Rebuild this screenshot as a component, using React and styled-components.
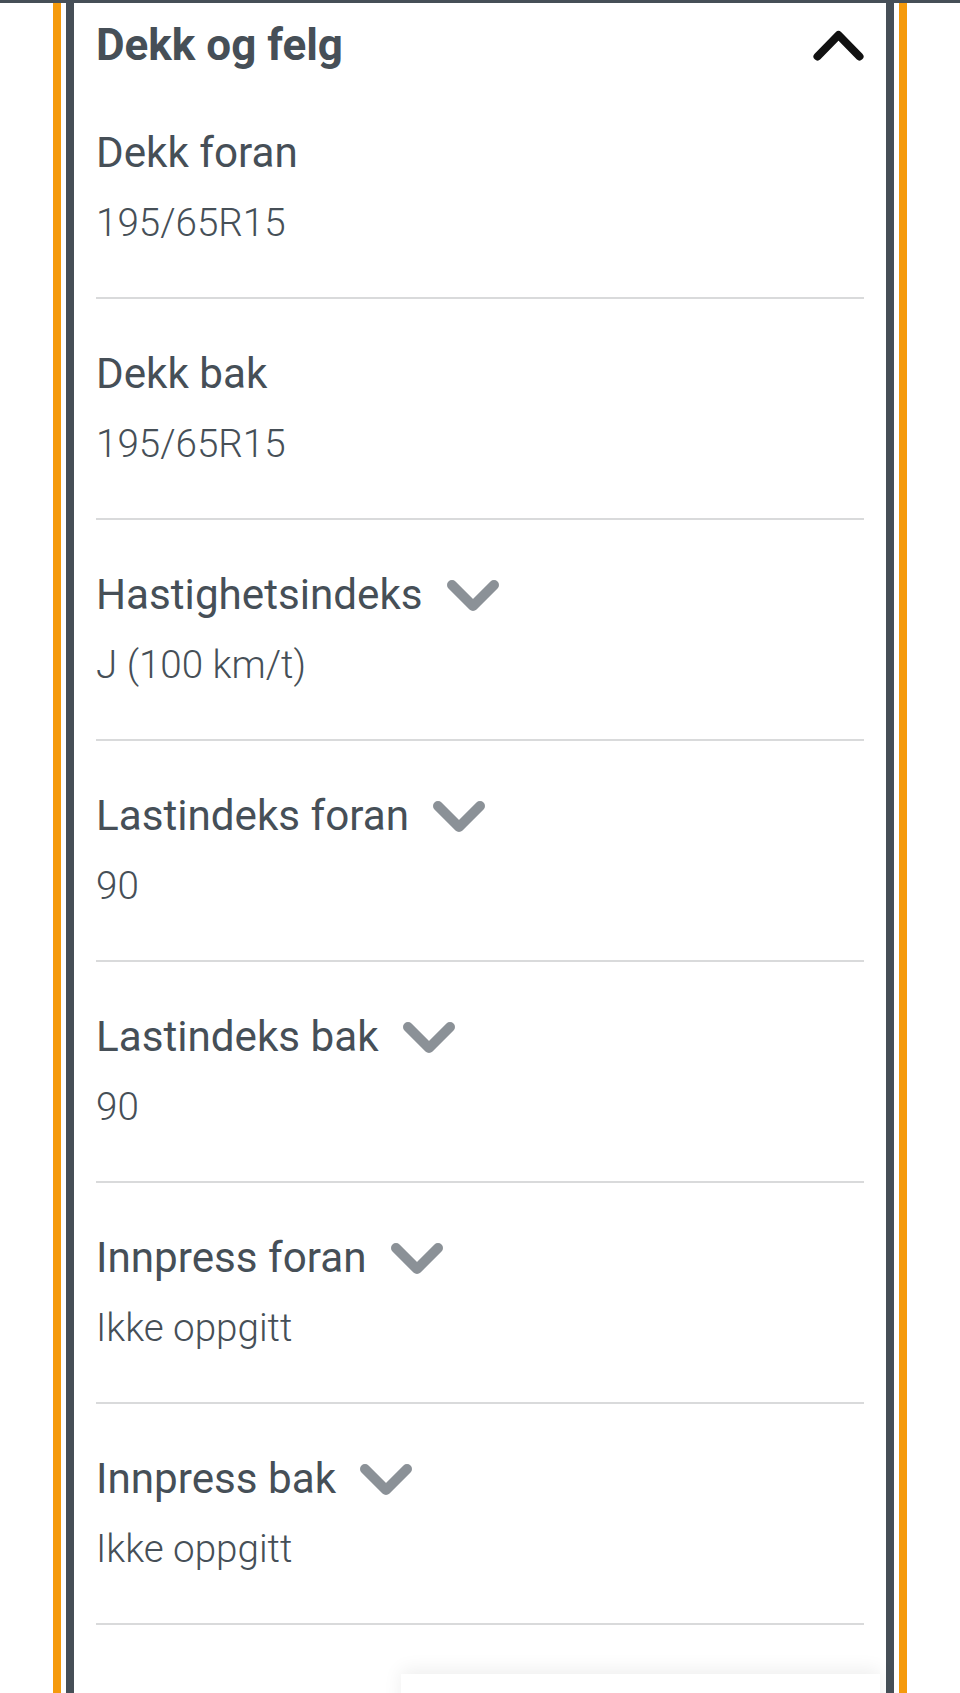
import styled, { createGlobalStyle } from "styled-components"

const GlobalStyle = createGlobalStyle`
    html, body {
        margin: 0;
        padding: 0;
        background: #ffffff;
    }
    body {
        font-family: Roboto, "Liberation Sans", Arial, sans-serif;
        color: #464f57;
    }
`

const Page = styled.div`
    height: 1693px;
    overflow: hidden;
    background: #ffffff;
`

const TopRule = styled.div`
    height: 3px;
    background: #464f57;
`

const Frame = styled.div`
    margin: 0 53px;
    padding: 0 5px;
    border-left: 8px solid #f59a0c;
    border-right: 8px solid #f59a0c;
    height: 1690px;
    box-sizing: border-box;
`

const Panel = styled.section`
    height: 100%;
    box-sizing: border-box;
    padding: 0 22px;
    border-left: 8px solid #464f57;
    border-right: 8px solid #464f57;
`

const Header = styled.div`
    display: flex;
    align-items: center;
    justify-content: space-between;
    padding: 16px 0 7px;
`

const Heading = styled.h2`
    margin: 0;
    font-size: 44px;
    line-height: 52px;
    font-weight: 700;
    color: #464f57;
`

const List = styled.dl`
    margin: 0;
`

const Row = styled.div`
    padding: 50px 0 51px;
    border-bottom: 2px solid #d9dadb;
`

const Label = styled.dt`
    display: flex;
    align-items: center;
    gap: 24px;
    font-size: 42.2px;
    line-height: 50px;
    font-weight: 400;
    color: #464f57;
`

const Value = styled.dd`
    margin: 22px 0 0;
    font-size: 38.6px;
    line-height: 46px;
    font-weight: 300;
    color: #464f57;
`

const Floating = styled.div`
    margin: 49px -16px 0 auto;
    width: 479px;
    height: 120px;
    background: #ffffff;
    box-shadow: 0 -4px 18px rgba(0, 0, 0, 0.07);
`

const ChevronUp = () => (
    <svg width="51" height="32" viewBox="0 0 51 32" fill="none">
        <polyline points="4.5,27.5 25.5,6 46.5,27.5" stroke="#111111" strokeWidth="8" strokeLinecap="round" strokeLinejoin="round" />
    </svg>
)

const ChevronDown = () => (
    <svg width="52" height="31" viewBox="0 0 52 31" fill="none">
        <polyline points="5,5 26,26 47,5" stroke="#8b9197" strokeWidth="10" strokeLinecap="round" strokeLinejoin="round" />
    </svg>
)

const rows = [
    { label: "Dekk foran", value: "195/65R15" },
    { label: "Dekk bak", value: "195/65R15" },
    { label: "Hastighetsindeks", value: "J (100 km/t)", info: true },
    { label: "Lastindeks foran", value: "90", info: true },
    { label: "Lastindeks bak", value: "90", info: true },
    { label: "Innpress foran", value: "Ikke oppgitt", info: true },
    { label: "Innpress bak", value: "Ikke oppgitt", info: true },
]

const App = () => {
    return (
        <Page>
            <GlobalStyle />
            <TopRule />
            <Frame>
                <Panel>
                    <Header>
                        <Heading>Dekk og felg</Heading>
                        <ChevronUp />
                    </Header>
                    <List>
                        {rows.map((row) => (
                            <Row key={row.label}>
                                <Label>
                                    {row.label}
                                    {row.info && <ChevronDown />}
                                </Label>
                                <Value>{row.value}</Value>
                            </Row>
                        ))}
                    </List>
                    <Floating />
                </Panel>
            </Frame>
        </Page>
    )
}

export default App
